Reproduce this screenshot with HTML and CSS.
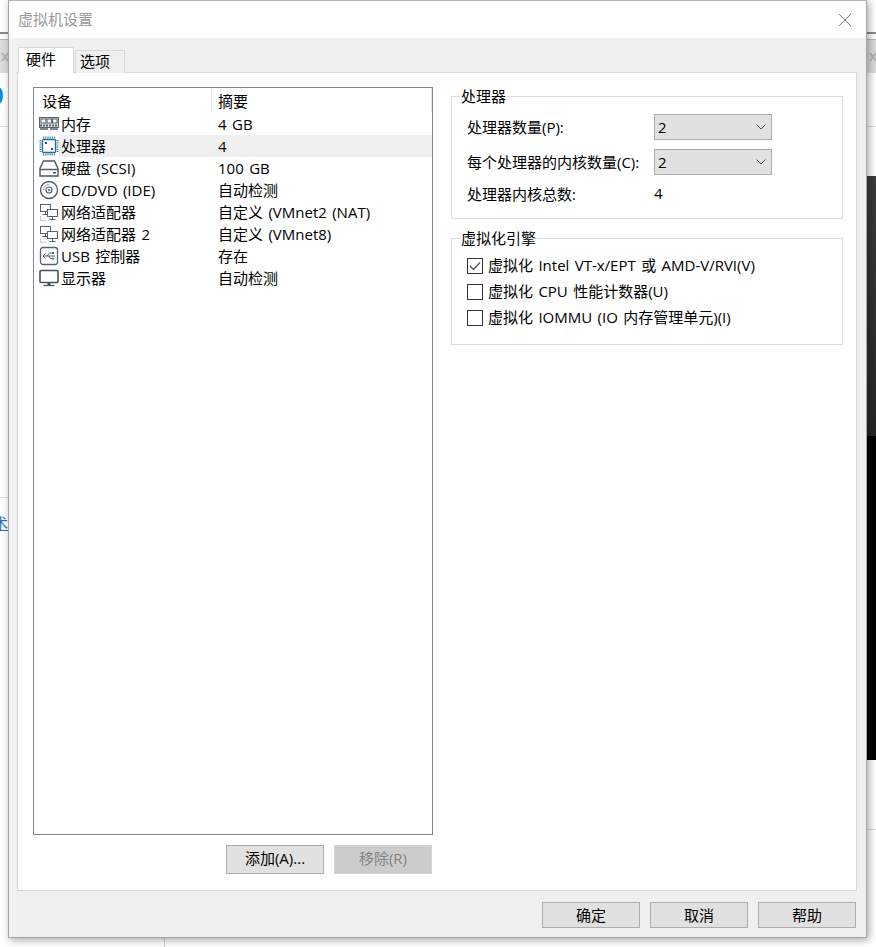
FILE: index.html
```html
<!DOCTYPE html>
<html lang="zh-CN">
<head>
<meta charset="utf-8">
<title>虚拟机设置</title>
<link rel="stylesheet" href="styles.css">
</head>
<body>
<div class="desktop">
  <i class="hline l1"></i><i class="hline l2"></i><i class="band"></i><i class="hline l3"></i>
  <i class="hline l4"></i><i class="hline l5"></i>
  <i class="vline"></i>
  <i class="dark d1"></i><i class="dark d2"></i>
  <span class="peek-num">0</span>
  <span class="peek-link">术</span>
  <svg class="peek-x px1" width="8" height="10" viewBox="0 0 8 10"><path d="M1 1l6 8M7 1L1 9" stroke="#b4b4b4" stroke-width="2" fill="none"/></svg>
  <svg class="peek-x px2" width="8" height="10" viewBox="0 0 8 10"><path d="M1 1l6 8M7 1L1 9" stroke="#b4b4b4" stroke-width="2" fill="none"/></svg>
</div>

<div class="dialog">
  <header class="titlebar">
    <span class="title">虚拟机设置</span>
    <svg class="close" width="14" height="14" viewBox="0 0 14 14"><path d="M1 1l12 12M13 1L1 13" stroke="#777" stroke-width="1" fill="none"/></svg>
  </header>
  <div class="content">
    <div class="tabs">
      <div class="tab active">硬件</div>
      <div class="tab">选项</div>
    </div>
    <div class="panel">
      <div class="left">
        <div class="list">
          <div class="list-head">
            <div class="hcell hname">设备</div>
            <div class="hcell hsum">摘要</div>
          </div>
          <div class="row">
            <svg class="ico" width="20" height="20" viewBox="0 0 20 20"><rect x="0.5" y="3.500" width="19" height="10" fill="#dfe4e8" stroke="#56626c"/><rect x="2" y="5" width="5" height="4" fill="#fff" stroke="#56626c"/><rect x="8" y="5" width="4.500" height="4" fill="#fff" stroke="#56626c"/><rect x="13.500" y="5" width="4.500" height="4" fill="#fff" stroke="#56626c"/><path d="M1 11.500h18" stroke="#56626c" stroke-width="2" stroke-dasharray="2 1"/><path d="M1 15h8M11 15h8" stroke="#56626c" stroke-width="1.500"/></svg>
            <div class="cells"><span class="c-name">内存</span><span class="c-sum">4 GB</span></div>
          </div>
          <div class="row sel">
            <svg class="ico" width="20" height="20" viewBox="0 0 20 20"><rect x="0" y="0" width="20" height="20" fill="#fff"/><rect x="3.500" y="3.500" width="13" height="13" rx="1" fill="#fff" stroke="#2f6a8f" stroke-width="1.300"/><path d="M4 1.500h12M4 18.500h12M1.500 4v12M18.500 4v12" stroke="#2e8cc4" stroke-width="2" stroke-dasharray="1.200 1"/><rect x="6" y="6" width="2" height="2" fill="#39464f"/><rect x="12" y="12" width="2" height="2" fill="#39464f"/></svg>
            <div class="cells"><span class="c-name">处理器</span><span class="c-sum">4</span></div>
          </div>
          <div class="row">
            <svg class="ico" width="20" height="20" viewBox="0 0 20 20"><path d="M4.500 3h11L19 10.500V18H1v-7.500z" fill="#fff" stroke="#4b5761" stroke-width="1.400"/><path d="M1 11.500h18" stroke="#4b5761" stroke-width="1.400"/><rect x="14" y="14" width="3" height="1.500" fill="#4b5761"/></svg>
            <div class="cells"><span class="c-name">硬盘 (SCSI)</span><span class="c-sum">100 GB</span></div>
          </div>
          <div class="row">
            <svg class="ico" width="20" height="20" viewBox="0 0 20 20"><circle cx="10" cy="10" r="8.500" fill="#fff" stroke="#4b5761" stroke-width="1.300"/><circle cx="10" cy="10" r="3" fill="#fff" stroke="#4b5761" stroke-width="1.200"/><circle cx="10" cy="10" r="1" fill="#4b5761"/><path d="M4.500 10a5.500 5.500 0 0 1 5.500-5.500" stroke="#8e99a1" fill="none"/></svg>
            <div class="cells"><span class="c-name">CD/DVD (IDE)</span><span class="c-sum">自动检测</span></div>
          </div>
          <div class="row">
            <svg class="ico" width="20" height="20" viewBox="0 0 20 20"><rect x="1.500" y="2.500" width="10" height="7" fill="#fff" stroke="#56626c"/><path d="M6.500 10v2M3.500 12.500h5" stroke="#56626c"/><rect x="8.500" y="7.500" width="10" height="7" fill="#fff" stroke="#56626c"/><path d="M13.500 15v2M10.500 17.500h6" stroke="#56626c"/><path d="M1.500 14.500v4h6" stroke="#8e99a1" stroke-dasharray="1 1" fill="none"/></svg>
            <div class="cells"><span class="c-name">网络适配器</span><span class="c-sum">自定义 (VMnet2 (NAT)</span></div>
          </div>
          <div class="row">
            <svg class="ico" width="20" height="20" viewBox="0 0 20 20"><rect x="1.500" y="2.500" width="10" height="7" fill="#fff" stroke="#56626c"/><path d="M6.500 10v2M3.500 12.500h5" stroke="#56626c"/><rect x="8.500" y="7.500" width="10" height="7" fill="#fff" stroke="#56626c"/><path d="M13.500 15v2M10.500 17.500h6" stroke="#56626c"/><path d="M1.500 14.500v4h6" stroke="#8e99a1" stroke-dasharray="1 1" fill="none"/></svg>
            <div class="cells"><span class="c-name">网络适配器 2</span><span class="c-sum">自定义 (VMnet8)</span></div>
          </div>
          <div class="row">
            <svg class="ico" width="20" height="20" viewBox="0 0 20 20"><rect x="1.500" y="1.500" width="17" height="17" rx="2.500" fill="#fff" stroke="#56626c" stroke-width="1.300"/><path d="M4 10h12M6.500 7.500L4 10l2.500 2.500M8 10l2.500-3H13M9.500 10l2 2.500H13" stroke="#56626c" fill="none"/><rect x="13" y="6" width="2" height="2" fill="#56626c"/><circle cx="14" cy="12.500" r="1" fill="#56626c"/></svg>
            <div class="cells"><span class="c-name">USB 控制器</span><span class="c-sum">存在</span></div>
          </div>
          <div class="row">
            <svg class="ico" width="20" height="20" viewBox="0 0 20 20"><rect x="1" y="2.500" width="18" height="12" rx="1" fill="#fff" stroke="#46525c" stroke-width="1.600"/><path d="M10 15v2" stroke="#46525c" stroke-width="3"/><path d="M4.500 17.500h11" stroke="#46525c" stroke-width="1.300"/></svg>
            <div class="cells"><span class="c-name">显示器</span><span class="c-sum">自动检测</span></div>
          </div>
        </div>
        <div class="list-actions">
          <button class="btn">添加(A)...</button>
          <button class="btn disabled">移除(R)</button>
        </div>
      </div>
      <div class="right">
        <section class="group g1">
          <h2 class="legend">处理器</h2>
          <div class="form-row"><span class="lbl">处理器数量(P):</span>
            <div class="combo"><span>2</span><svg width="10" height="6" viewBox="0 0 10 6"><path d="M0.500 0.500L5 5l4.500-4.500" stroke="#555" fill="none"/></svg></div></div>
          <div class="form-row"><span class="lbl">每个处理器的内核数量(C):</span>
            <div class="combo"><span>2</span><svg width="10" height="6" viewBox="0 0 10 6"><path d="M0.500 0.500L5 5l4.500-4.500" stroke="#555" fill="none"/></svg></div></div>
          <div class="form-row static"><span class="lbl">处理器内核总数:</span><span class="val">4</span></div>
        </section>
        <section class="group g2">
          <h2 class="legend">虚拟化引擎</h2>
          <div class="check-row"><span class="box"><svg width="14" height="14" viewBox="0 0 14 14"><path d="M2 7l3.500 3.500L12 3.500" stroke="#555" stroke-width="1.300" fill="none"/></svg></span>虚拟化 Intel VT-x/EPT 或 AMD-V/RVI(V)</div>
          <div class="check-row"><span class="box"></span>虚拟化 CPU 性能计数器(U)</div>
          <div class="check-row"><span class="box"></span>虚拟化 IOMMU (IO 内存管理单元)(I)</div>
        </section>
      </div>
    </div>
    <div class="footer">
      <button class="btn foot">确定</button>
      <button class="btn foot">取消</button>
      <button class="btn foot">帮助</button>
    </div>
  </div>
</div>
</body>
</html>
```

FILE: styles.css
```css
* { box-sizing: border-box; }
html, body { margin: 0; padding: 0; height: 100%; }
body {
  position: relative;
  width: 876px;
  height: 947px;
  overflow: hidden;
  background: #fff;
  font-family: "Open Sans", "Noto Sans CJK SC", sans-serif;
  font-size: 15px;
  word-spacing: 1.5px;
  color: #000;
}

/* what shows behind the dialog */
.desktop { position: absolute; inset: 0; overflow: hidden; }
.desktop i { position: absolute; display: block; }
.hline { left: 0; right: 0; height: 1px; background: #ddd; }
.l1 { top: 32px; height: 2px; background: #8a8a8a; }
.l2 { top: 39px; background: #b8b8b8; }
.band { left: 0; right: 0; top: 40px; height: 33px; background: #dcdcdc; }
.l3 { top: 126px; }
.l4 { top: 497px; }
.l5 { top: 829px; left: 867px; }
.vline { left: 164px; top: 938px; width: 1px; height: 9px; background: #ccc; }
.dark { left: 867px; right: 0; }
.d1 { top: 176px; height: 260px; background: linear-gradient(#3c3c3c, #262626); }
.d2 { top: 436px; height: 324px; background: #000; }
.peek-num { position: absolute; left: -10px; top: 81px; font-size: 24px; line-height: 28px; color: #0b84e3; font-weight: 600; }
.peek-link { position: absolute; left: -7px; top: 512px; font-size: 15px; color: #2a6fb5; text-decoration: underline; }
.peek-x { position: absolute; top: 52px; }
.px1 { left: 1px; }
.px2 { left: 869px; }

/* dialog window */
.dialog {
  position: absolute;
  left: 8px;
  top: 0;
  width: 859px;
  height: 938px;
  background: #f0f0f0;
  border: 1px solid #a6a6a6;
  border-top-color: #b5b5b5;
  box-shadow: 2px 2px 8px rgba(0, 0, 0, .35);
  display: flex;
  flex-direction: column;
}
.titlebar {
  height: 37px;
  flex: none;
  background: #fff;
  display: flex;
  align-items: center;
  justify-content: space-between;
  padding: 0 14px 2px 9px;
}
.close { margin-top: 2px; }
.title { color: #9a9a9a; }
.content { flex: 1; padding: 9px 9px 0 8px; display: flex; flex-direction: column; }

.tabs { display: flex; height: 26px; align-items: flex-end; position: relative; z-index: 1; padding-left: 1px; }
.tab {
  width: 50px;
  height: 23px;
  margin-left: 1px;
  border: 1px solid #d9d9d9;
  border-bottom: 0;
  background: #f0f0f0;
  padding-left: 4px;
  line-height: 20px;
}
.tab.active {
  width: 56px;
  height: 26px;
  margin-left: 0;
  background: #fff;
  padding-left: 7px;
  line-height: 23px;
}
.panel {
  height: 819px;
  margin-top: -1px;
  flex: none;
  background: #fff;
  border: 1px solid #d9d9d9;
  padding: 14px 13px 0 15px;
  display: flex;
  gap: 18px;
}

/* device list */
.left { width: 400px; flex: none; }
.list { height: 748px; border: 1px solid #828790; background: #fff; }
.list-head { display: flex; height: 25px; }
.hcell { line-height: 26px; height: 24px; border-right: 1px solid #e5e5e5; }
.hname { width: 178px; padding-left: 8px; }
.hsum { width: 220px; padding-left: 6px; }
.row { display: flex; height: 22px; padding-left: 5px; align-items: center; }
.ico { flex: none; }
.cells { flex: 1; display: flex; height: 22px; line-height: 22px; padding-left: 2px; }
.row.sel .cells { background: #f0f0f0; }
.c-name { width: 157px; flex: none; white-space: nowrap; }
.c-sum { white-space: nowrap; }

.list-actions { display: flex; justify-content: flex-end; gap: 10px; margin-top: 10px; padding-right: 1px; }
.btn {
  width: 98px;
  height: 29px;
  border: 1px solid #adadad;
  background: #e1e1e1;
  font: inherit;
  word-spacing: inherit;
  color: #000;
  padding: 0 0 4px;
}
.btn.disabled { background: #cccccc; border-color: #d4d4d4; color: #838383; }

/* right column */
.right { width: 392px; flex: none; padding-top: 9px; }
.group { position: relative; border: 1px solid #dcdcdc; padding: 17px 15px 0; margin: 0; }
.g1 { height: 123px; }
.g2 { height: 107px; margin-top: 19px; padding-top: 19px; }
.legend {
  position: absolute;
  left: 8px;
  top: -11px;
  margin: 0;
  padding: 0 1px;
  background: #fff;
  font-size: 15px;
  font-weight: 400;
  line-height: 20px;
}
.form-row { display: flex; align-items: center; height: 26px; margin-bottom: 9px; }
.form-row.static { height: 20px; margin-top: 6px; }
.lbl, .val { padding-bottom: 2px; }
.lbl { width: 187px; flex: none; white-space: nowrap; }
.combo {
  width: 118px;
  height: 26px;
  border: 1px solid #adadad;
  background: #e1e1e1;
  display: flex;
  align-items: center;
  justify-content: space-between;
  padding: 0 5px 0 3px;
}
.check-row { display: flex; align-items: flex-start; height: 16px; line-height: 14px; margin-bottom: 10px; white-space: pre; }
.box {
  width: 16px;
  height: 16px;
  flex: none;
  border: 1px solid #333;
  background: #fff;
  margin-right: 5px;
  display: flex;
  align-items: center;
  justify-content: center;
}

.footer { display: flex; justify-content: flex-end; gap: 10px; margin-top: 11px; padding-right: 1px; }
.foot { height: 26px; padding-bottom: 2px; }
```
